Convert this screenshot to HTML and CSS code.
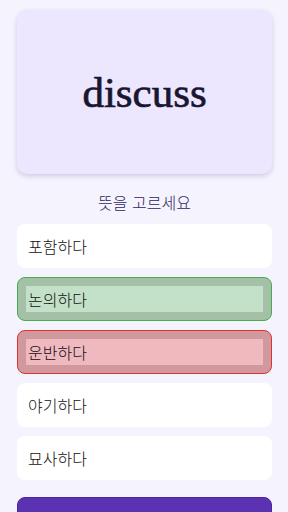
FILE: index.html
```html
<!DOCTYPE html>
<html lang="ko">
<head>
    <meta charset="UTF-8">
    <meta name="viewport" content="width=device-width, initial-scale=1.0">
    <title>Quiz</title>
    <link rel="stylesheet" href="styles.css">
</head>
<body>
    <div class="quiz">
        <div class="word-card">
            <h1 class="word">discuss</h1>
        </div>
        <p class="prompt">뜻을 고르세요</p>
        <div class="options">
            <button class="option">포함하다</button>
            <button class="option correct"><span class="option-label">논의하다</span></button>
            <button class="option wrong"><span class="option-label">운반하다</span></button>
            <button class="option">야기하다</button>
            <button class="option">묘사하다</button>
        </div>
        <button class="next-btn"></button>
    </div>
</body>
</html>
```

FILE: styles.css
```css
* {
    margin: 0;
    padding: 0;
    box-sizing: border-box;
    font-family: "Noto Sans CJK KR", "Noto Sans", sans-serif;
}
body
{
    background: #f5f3fd;
    width: 288px;
    height: 512px;
    overflow: hidden;
}
.quiz
{
    padding: 10px 16px 0 17px;
    display: flex;
    flex-direction: column;
}
.word-card
{
    height: 164px;
    background: #ece7fe;
    border-radius: 10px;
    box-shadow: 0px 2px 5px rgba(60, 40, 120, 0.2);
    display: flex;
    align-items: center;
    justify-content: center;
}
.word
{
    font-family: "Liberation Serif", serif;
    font-size: 43px;
    font-weight: normal;
    color: #1a1530;
    -webkit-text-stroke: 0.7px #1a1530;
}
.prompt
{
    text-align: center;
    font-size: 16px;
    font-weight: 300;
    color: #2c2563;
    margin-top: 17px;
    line-height: 22px;
}
.options
{
    display: flex;
    flex-direction: column;
    gap: 9px;
    margin-top: 11px;
}
.option
{
    height: 44px;
    background: white;
    border: none;
    border-radius: 8px;
    text-align: left;
    padding: 0 11px;
    font-size: 16px;
    font-weight: 300;
    color: #111;
    display: flex;
    align-items: center;
}
.option.correct
{
    background: #a4c1a7;
    border: 1px solid #45ad4c;
    padding: 8px;
}
.option.wrong
{
    background: #d0999e;
    border: 1px solid #e2302f;
    padding: 8px;
}
.option-label
{
    flex: 1;
    height: 100%;
    display: flex;
    align-items: center;
    padding-left: 2px;
}
.correct .option-label
{
    background: #c3e0c8;
}
.wrong .option-label
{
    background: #f0b9bf;
}
.next-btn
{
    margin-top: 17px;
    height: 44px;
    background: #5b33b2;
    border: 1px solid #4a22a6;
    border-radius: 8px;
}
```
